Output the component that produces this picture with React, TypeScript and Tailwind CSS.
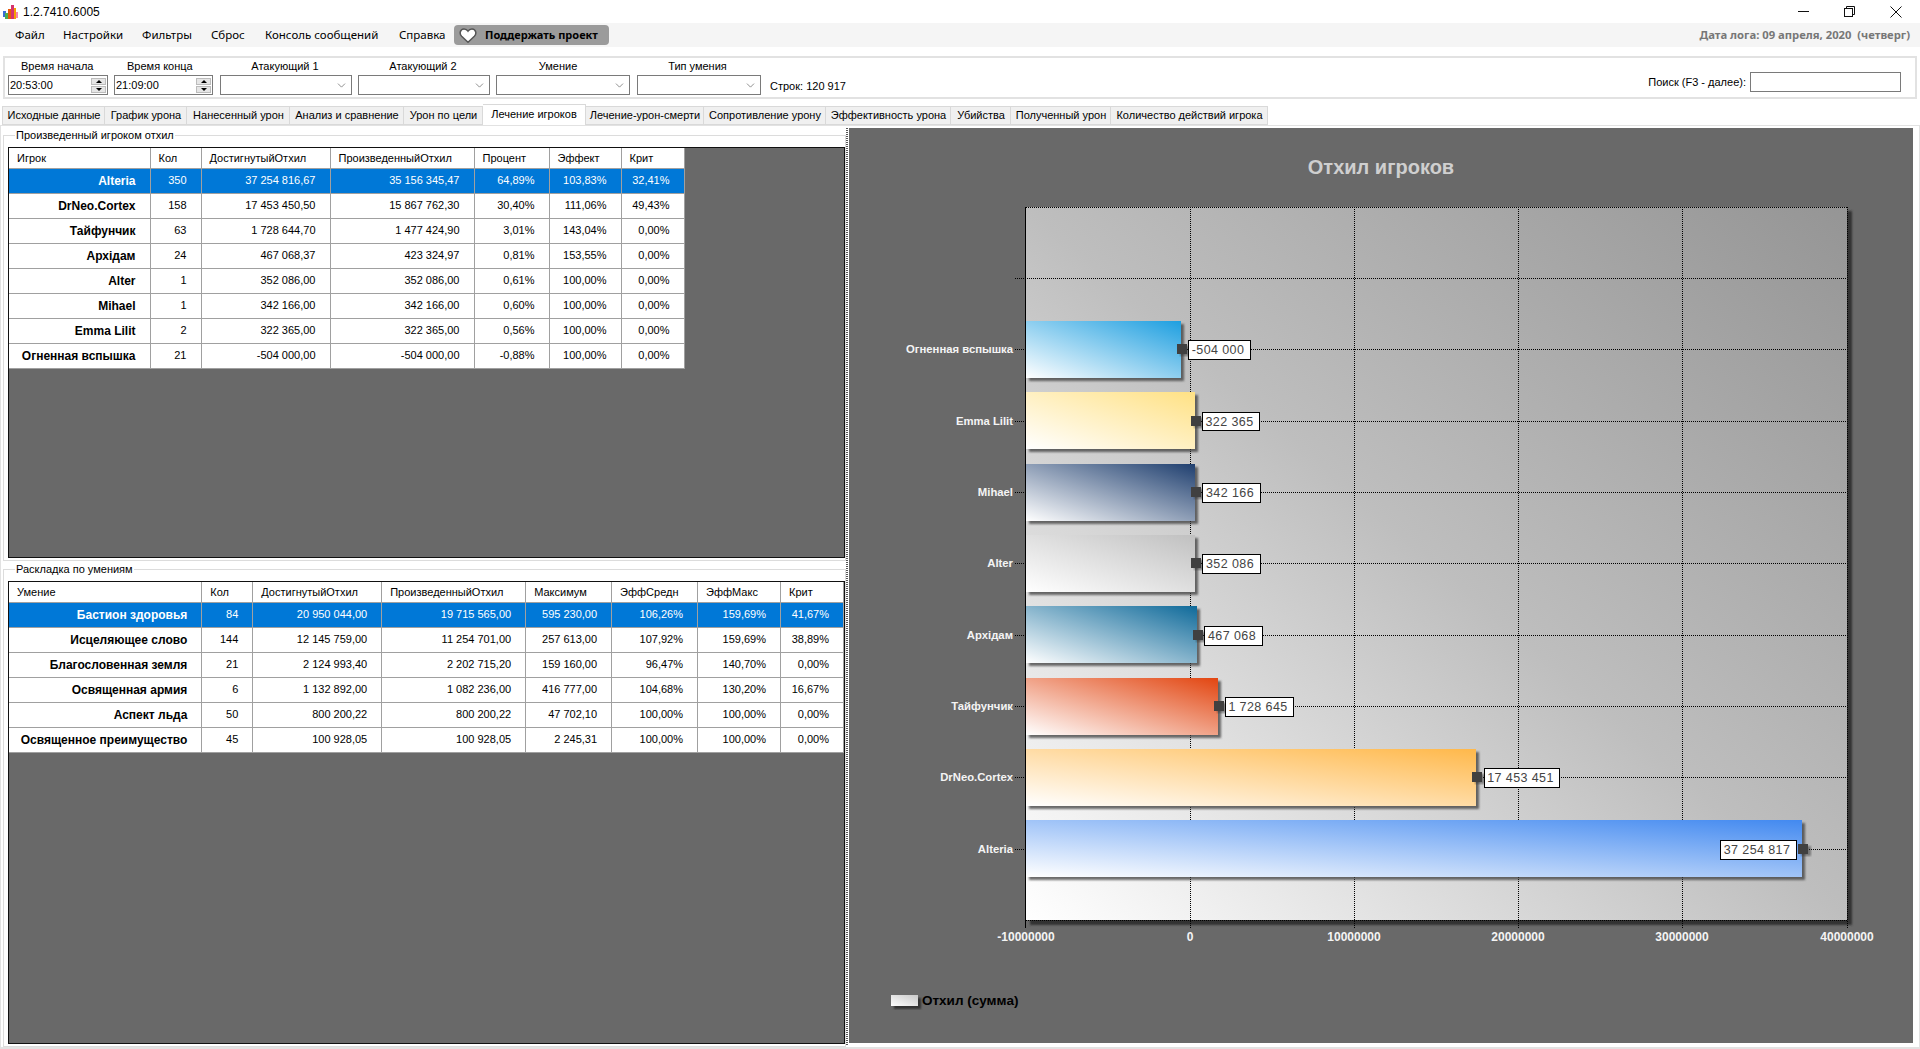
import { ChevronDown } from "lucide-react";

const menu = [
  { label: "Файл", cls: "w-[48px]" },
  { label: "Настройки", cls: "w-[79px]" },
  { label: "Фильтры", cls: "w-[69px]" },
  { label: "Сброс", cls: "w-[54px]" },
  { label: "Консоль сообщений", cls: "w-[134px]" },
  { label: "Справка", cls: "w-[55px]" },
];

const tabs = [
  { label: "Исходные данные", cls: "w-[103px]" },
  { label: "График урона", cls: "w-[82px]" },
  { label: "Нанесенный урон", cls: "w-[103px]" },
  { label: "Анализ и сравнение", cls: "w-[114px]" },
  { label: "Урон по цели", cls: "w-[79px]" },
  { label: "Лечение игроков", cls: "w-[103px]", active: true },
  { label: "Лечение-урон-смерти", cls: "w-[118px]" },
  { label: "Сопротивление урону", cls: "w-[122px]" },
  { label: "Эффективность урона", cls: "w-[125px]" },
  { label: "Убийства", cls: "w-[60px]" },
  { label: "Полученный урон", cls: "w-[100px]" },
  { label: "Количество действий игрока", cls: "w-[157px]" },
];

const playerHead = ["Игрок", "Кол", "ДостигнутыйОтхил", "ПроизведенныйОтхил", "Процент", "Эффект", "Крит"];
const playerCols = ["w-[141px]", "w-[51px]", "w-[129px]", "w-[144px]", "w-[75px]", "w-[72px]", "w-[63px]"];
const playerRows = [
  ["Alteria", "350", "37 254 816,67", "35 156 345,47", "64,89%", "103,83%", "32,41%"],
  ["DrNeo.Cortex", "158", "17 453 450,50", "15 867 762,30", "30,40%", "111,06%", "49,43%"],
  ["Тайфунчик", "63", "1 728 644,70", "1 477 424,90", "3,01%", "143,04%", "0,00%"],
  ["Архідам", "24", "467 068,37", "423 324,97", "0,81%", "153,55%", "0,00%"],
  ["Alter", "1", "352 086,00", "352 086,00", "0,61%", "100,00%", "0,00%"],
  ["Mihael", "1", "342 166,00", "342 166,00", "0,60%", "100,00%", "0,00%"],
  ["Emma Lilit", "2", "322 365,00", "322 365,00", "0,56%", "100,00%", "0,00%"],
  ["Огненная вспышка", "21", "-504 000,00", "-504 000,00", "-0,88%", "100,00%", "0,00%"],
];

const skillHead = ["Умение", "Кол", "ДостигнутыйОтхил", "ПроизведенныйОтхил", "Максимум", "ЭффСредн", "ЭффМакс", "Крит"];
const skillCols = ["w-[193px]", "w-[51px]", "w-[129px]", "w-[144px]", "w-[86px]", "w-[86px]", "w-[83px]", "w-[63px]"];
const skillRows = [
  ["Бастион здоровья", "84", "20 950 044,00", "19 715 565,00", "595 230,00", "106,26%", "159,69%", "41,67%"],
  ["Исцеляющее слово", "144", "12 145 759,00", "11 254 701,00", "257 613,00", "107,92%", "159,69%", "38,89%"],
  ["Благословенная земля", "21", "2 124 993,40", "2 202 715,20", "159 160,00", "96,47%", "140,70%", "0,00%"],
  ["Освященная армия", "6", "1 132 892,00", "1 082 236,00", "416 777,00", "104,68%", "130,20%", "16,67%"],
  ["Аспект льда", "50", "800 200,22", "800 200,22", "47 702,10", "100,00%", "100,00%", "0,00%"],
  ["Освященное преимущество", "45", "100 928,05", "100 928,05", "2 245,31", "100,00%", "100,00%", "0,00%"],
];

// chart geometry, in page pixels
const rowYs = [349.5, 421.5, 492.5, 563.5, 635.5, 706.5, 777.5, 849.5];
const bars = [
  { name: "Огненная вспышка", value: "-504 000", right: 1181, y: 321, color: "#1e9fe0", box: [1188, 340, 62, 19] },
  { name: "Emma Lilit", value: "322 365", right: 1195, y: 392, color: "#ffe184", box: [1202, 412, 57, 18] },
  { name: "Mihael", value: "342 166", right: 1195, y: 464, color: "#1f3f6f", box: [1202, 483, 58, 19] },
  { name: "Alter", value: "352 086", right: 1195, y: 535, color: "#c0c0c0", box: [1202, 554, 58, 19] },
  { name: "Архідам", value: "467 068", right: 1197, y: 606, color: "#0f6a9a", box: [1204, 626, 58, 19] },
  { name: "Тайфунчик", value: "1 728 645", right: 1218, y: 678, color: "#e24510", box: [1225, 697, 68, 19] },
  { name: "DrNeo.Cortex", value: "17 453 451", right: 1476, y: 749, color: "#ffb84a", box: [1484, 768, 75, 19] },
  { name: "Alteria", value: "37 254 817", right: 1802, y: 820, color: "#4289f0", box: [1720, 840, 76, 19] },
];
const gridXs = [1190, 1354, 1518, 1682];
const ticks = [
  { x: 1026, label: "-10000000" },
  { x: 1190, label: "0" },
  { x: 1354, label: "10000000" },
  { x: 1518, label: "20000000" },
  { x: 1682, label: "30000000" },
  { x: 1847, label: "40000000" },
];

function AppIcon() {
  return (
    <svg width="15" height="14" viewBox="0 0 15 14" className="shrink-0">
      <rect x="0" y="6" width="3" height="6" fill="#3b6fd4" />
      <rect x="2" y="8" width="3" height="6" fill="#4caf50" />
      <rect x="5" y="4" width="3" height="10" fill="#e8590c" />
      <rect x="8" y="0" width="3" height="14" fill="#d6336c" />
      <rect x="11" y="3" width="2" height="11" fill="#f59f00" />
      <rect x="13" y="7" width="2" height="6" fill="#f783ac" />
    </svg>
  );
}

function Heart() {
  return (
    <svg width="18" height="15" viewBox="0 0 24 20" className="shrink-0">
      <path d="M12 19 3.500 11C0 7.500 1.500 1.500 6.500 1.200c2.500-.1 4.300 1 5.500 3 1.200-2 3-3.100 5.500-3 5 .3 6.500 6.300 3 9.800z" fill="#fff" stroke="#555" strokeWidth="2" />
    </svg>
  );
}

function WindowButtons() {
  return (
    <div className="ml-auto flex items-center gap-[35px]">
      <svg width="11" height="11" viewBox="0 0 11 11" stroke="#111" fill="none">
        <path d="M0 5.500h11" />
      </svg>
      <svg width="11" height="11" viewBox="0 0 11 11" stroke="#111" fill="none">
        <rect x="0.500" y="2.500" width="8" height="8" />
        <path d="M2.500 2.500v-2h8v8h-2" />
      </svg>
      <svg width="12" height="12" viewBox="0 0 12 12" stroke="#111" fill="none">
        <path d="M.5.500l11 11M11.500.500l-11 11" />
      </svg>
    </div>
  );
}

function Spinner() {
  return (
    <div className="flex flex-col w-[15px] h-[15px] gap-px">
      <div className="flex-1 bg-[#e6e6e6] border border-[#bcbcbc] flex items-center justify-center">
        <div className="w-0 h-0 border-x-[3px] border-x-transparent border-b-[3px] border-b-black" />
      </div>
      <div className="flex-1 bg-[#e6e6e6] border border-[#bcbcbc] flex items-center justify-center">
        <div className="w-0 h-0 border-x-[3px] border-x-transparent border-t-[3px] border-t-black" />
      </div>
    </div>
  );
}

function TimeField({ label, value, cls }: { label: string; value: string; cls: string }) {
  return (
    <div className={`flex flex-col ${cls}`}>
      <span className="h-[17px] leading-[17px] pl-[13px]">{label}</span>
      <div className="w-full h-[20px] border border-[#7a7a7a] flex items-center justify-between pl-px pr-[1px]">
        <span>{value}</span>
        <Spinner />
      </div>
    </div>
  );
}

function ComboField({ label, cls, labelCls }: { label: string; cls: string; labelCls: string }) {
  return (
    <div className={`flex flex-col items-center ${cls}`}>
      <span className={`h-[17px] leading-[17px] ${labelCls}`}>{label}</span>
      <div className="w-full h-[20px] border border-[#7a7a7a] flex items-center justify-end pr-[3px]">
        <ChevronDown size={13} strokeWidth={1.2} color="#555" />
      </div>
    </div>
  );
}

function DataGrid({ head, cols, rows }: { head: string[]; cols: string[]; rows: string[][] }) {
  return (
    <div className="flex-1 min-h-0 bg-[#696969] border border-[#111]">
      <table className="table-fixed border-collapse text-[11px]">
        <colgroup>
          {cols.map((c, i) => (
            <col key={i} className={c} />
          ))}
        </colgroup>
        <thead>
          <tr className="h-[20px] bg-white">
            {head.map((h) => (
              <th key={h} className="font-normal text-left pl-[8px] border-r border-b border-[#a0a0a0] text-black">
                {h}
              </th>
            ))}
          </tr>
        </thead>
        <tbody>
          {rows.map((row, r) => (
            <tr key={row[0]} className={`h-[25px] ${r === 0 ? "bg-[#0078d7] text-white" : "bg-white text-black"}`}>
              {row.map((cell, i) => (
                <td key={i} className={`text-right pr-[14px] border-r border-b border-[#a0a0a0] ${i === 0 ? "font-bold text-[12px]" : ""}`}>
                  {cell}
                </td>
              ))}
            </tr>
          ))}
        </tbody>
      </table>
    </div>
  );
}

function Group({ title, cls, children }: { title: string; cls: string; children: React.ReactNode }) {
  return (
    <fieldset className={`flex flex-col border border-[#dcdcdc] pl-[4px] pr-0 pb-[2px] pt-[5px] min-h-0 ${cls}`}>
      <legend className="ml-[7px] px-[1px] text-[11px] leading-[13px]">{title}</legend>
      {children}
    </fieldset>
  );
}

function Chart() {
  return (
    <svg viewBox="849 128 1064 915" className="w-full h-full block">
      <defs>
        <linearGradient id="plot" x1="0" y1="1" x2="1" y2="0">
          <stop offset="0" stopColor="#ffffff" />
          <stop offset="0.5" stopColor="#bebebe" />
          <stop offset="1" stopColor="#959595" />
        </linearGradient>
        {bars.map((b, i) => (
          <linearGradient key={i} id={`bar${i}`} x1="0" y1="1" x2="1" y2="0">
            <stop offset="0" stopColor="#ffffff" />
            <stop offset="1" stopColor={b.color} />
          </linearGradient>
        ))}
        <linearGradient id="swatch" x1="0" y1="1" x2="1" y2="0">
          <stop offset="0" stopColor="#ffffff" />
          <stop offset="1" stopColor="#c8c8c8" />
        </linearGradient>
        <filter id="soft" x="-5%" y="-5%" width="110%" height="110%">
          <feGaussianBlur stdDeviation="1" />
        </filter>
      </defs>

      <text x="1381" y="174" textAnchor="middle" fontSize="20" fontWeight="700" fill="#cfcfcf">
        Отхил игроков
      </text>

      <rect x="1030" y="211" width="822" height="714" fill="#333" filter="url(#soft)" />
      <rect x="1026" y="207" width="821" height="713" fill="url(#plot)" />

      <g stroke="#000" strokeDasharray="1 1" shapeRendering="crispEdges">
        {gridXs.map((x) => (
          <line key={x} x1={x + 0.5} y1="207" x2={x + 0.5} y2="928" />
        ))}
        <line x1="1847.5" y1="207" x2="1847.5" y2="928" />
        <line x1="1026" y1="207.5" x2="1847" y2="207.500" />
        <line x1="1015" y1="278.5" x2="1847" y2="278.500" />
        {rowYs.map((y) => (
          <line key={y} x1="1015" y1={y} x2="1847" y2={y} />
        ))}
        <line x1="1026" y1="920.5" x2="1847" y2="920.500" />
      </g>
      <line x1="1025.5" y1="207" x2="1025.5" y2="928" stroke="#000" />

      {bars.map((b, i) => (
        <g key={b.name}>
          <rect x="1029" y={b.y + 3} width={b.right - 1026} height="57" fill="#3c3c3c" opacity="0.75" filter="url(#soft)" />
          <rect x="1026" y={b.y} width={b.right - 1026} height="57" fill={`url(#bar${i})`} />
          <text x="1013" y={rowYs[i] + 3.5} textAnchor="end" fontSize="11.300" fontWeight="700" fill="#f4f4f4">
            {b.name}
          </text>
        </g>
      ))}

      {bars.map((b, i) => (
        <g key={b.value}>
          <rect x={b.right - 1} y={Math.floor(rowYs[i]) - 3} width="10" height="10" fill="#333" opacity="0.5" filter="url(#soft)" />
          <rect x={b.right - 4} y={Math.floor(rowYs[i]) - 5} width="10" height="10" fill="#404040" />
          <rect x={b.box[0] + 0.5} y={b.box[1] + 0.5} width={b.box[2]} height={b.box[3]} fill="#fff" stroke="#000" />
          <text x={b.box[0] + b.box[2] / 2 - 1} y={b.box[1] + 14} textAnchor="middle" fontSize="12.500" letterSpacing="0.4" fill="#444">
            {b.value}
          </text>
        </g>
      ))}

      {ticks.map((t) => (
        <text key={t.x} x={t.x} y="941" textAnchor="middle" fontSize="12" fontWeight="700" fill="#f4f4f4">
          {t.label}
        </text>
      ))}

      <rect x="894" y="998" width="27" height="11" fill="#333" filter="url(#soft)" />
      <rect x="891" y="995" width="27" height="11" fill="url(#swatch)" />
      <text x="922" y="1005" fontSize="13.500" fontWeight="700" fill="#000">
        Отхил (сумма)
      </text>
    </svg>
  );
}

export default function App() {
  return (
    <div className="w-[1920px] h-[1049px] overflow-hidden bg-white flex flex-col text-[11px] text-black font-['Liberation_Sans',Arial,sans-serif]">
      {/* title bar */}
      <div className="h-[23px] shrink-0 flex items-center pl-[3px] pr-[18px]">
        <AppIcon />
        <span className="ml-[5px] text-[12px]">1.2.7410.6005</span>
        <WindowButtons />
      </div>

      {/* menu */}
      <div className="h-[24px] shrink-0 bg-[#f5f5f5] flex items-center pl-[15px] pr-[10px] text-[11.500px] font-['Noto_Sans',sans-serif]">
        {menu.map((m) => (
          <span key={m.label} className={m.cls}>
            {m.label}
          </span>
        ))}
        <div className="h-[20px] w-[155px] rounded-[4px] bg-[#9b9b9b] flex items-center pl-[5px] gap-[8px] font-bold text-[11px] whitespace-nowrap">
          <Heart />
          <span>Поддержать проект</span>
        </div>
        <span className="ml-auto font-bold text-[11.250px] text-[#777] whitespace-pre">Дата лога: 09 апреля, 2020  (четверг)</span>
      </div>

      {/* filters */}
      <div className="h-[43px] shrink-0 mt-[9px] mx-[3px] border-2 border-[#e2e2e2] flex items-start pl-[3px] pr-[14px]">
        <TimeField label="Время начала" value="20:53:00" cls="w-[100px]" />
        <TimeField label="Время конца" value="21:09:00" cls="w-[99px] ml-[6px]" />
        <ComboField label="Атакующий 1" cls="w-[132px] ml-[7px]" labelCls="pr-[2px]" />
        <ComboField label="Атакующий 2" cls="w-[132px] ml-[6px]" labelCls="pr-[2px]" />
        <ComboField label="Умение" cls="w-[134px] ml-[6px]" labelCls="pr-[10px]" />
        <ComboField label="Тип умения" cls="w-[124px] ml-[7px]" labelCls="pr-[3px]" />
        <span className="ml-[9px] mt-[18px] h-[20px] leading-[20px]">Строк: 120 917</span>
        <span className="ml-auto mt-[14px] h-[20px] leading-[20px]">Поиск (F3 - далее):</span>
        <div className="ml-[4px] mt-[14px] w-[151px] h-[20px] border border-[#7a7a7a]" />
      </div>

      {/* tabs */}
      <div className="h-[21px] shrink-0 mt-[5px] ml-[2px] flex items-end">
        {tabs.map((t) => (
          <div
            key={t.label}
            className={`${t.cls} flex items-center justify-center border border-l-0 first:border-l border-[#d9d9d9] ${
              t.active ? "h-[21px] bg-white border-b-0 pb-[2px]" : "h-[19px] bg-[#f0f0f0] pl-[1px]"
            }`}
          >
            {t.label}
          </div>
        ))}
      </div>

      {/* tab page */}
      <div className="flex-1 min-h-0 flex border-t border-b-2 border-[#e2e2e2] border-x">
        <div className="w-[845px] shrink-0 flex flex-col pl-[2px]">
          <Group title="Произведенный игроком отхил" cls="h-[432px] mt-[3px]">
            <DataGrid head={playerHead} cols={playerCols} rows={playerRows} />
          </Group>
          <Group title="Раскладка по умениям" cls="h-[484px] mt-[2px]">
            <DataGrid head={skillHead} cols={skillCols} rows={skillRows} />
          </Group>
        </div>
        <div className="w-[2px] shrink-0 my-[2px] bg-[repeating-linear-gradient(0deg,#555_0,#555_1px,#fff_1px,#fff_2px)]" />
        <div className="w-[1064px] h-[915px] shrink-0 mt-[2px] ml-[1px] bg-[#696969]">
          <Chart />
        </div>
      </div>
    </div>
  );
}
